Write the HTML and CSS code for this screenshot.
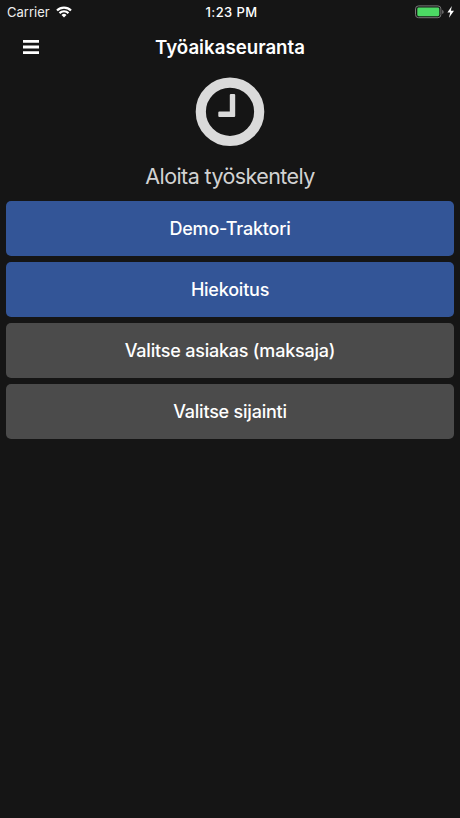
FILE: index.html
```html
<!DOCTYPE html>
<html lang="fi">

<head>
    <meta charset="UTF-8">
    <meta name="viewport" content="width=device-width, initial-scale=1.0">
    <title>Työaikaseuranta</title>
    <link rel="stylesheet" href="styles.css">
</head>

<body>
    <div class="statusbar">
        <div class="network">
            <span class="carrier">Carrier</span>
            <svg class="wifi" width="16" height="12" viewBox="0 0 16 12">
                <path d="M1 4.5a9.9 9.9 0 0 1 14 0" />
                <path d="M3.5 7.1a6.4 6.4 0 0 1 9 0" />
                <path class="dot" d="M8 11.6L5.5 9.1a3.5 3.5 0 0 1 5 0z" />
            </svg>
        </div>
        <span class="time">1:23 PM</span>
        <div class="power">
            <svg width="40" height="14" viewBox="0 0 40 14">
                <rect class="battery" x=".5" y=".9" width="25.4" height="11.8" rx="3" />
                <rect class="level" x="2.3" y="2.6" width="22" height="8.6" rx="1.4" />
                <path class="cap" d="M27.2 4.7c2 .8 2 3.6 0 4.4z" />
                <path class="bolt" d="M36.8 .9L32.4 7.6h2.8l-1.2 5.2 5-7h-3.1z" />
            </svg>
        </div>
    </div>

    <header>
        <button class="menu" aria-label="Menu">
            <svg width="16" height="15" viewBox="0 0 16 15">
                <path d="M0 1.4h16M0 7h16M0 12.6h16" />
            </svg>
        </button>
        <h1>Työaikaseuranta</h1>
    </header>

    <main>
        <svg class="clock" width="70" height="70" viewBox="0 0 70 70">
            <circle cx="35" cy="34.8" r="29.2" />
            <path d="M35.9 17h3.2q1.1 0 1.1 1.1v20.8q0 1.1-1.1 1.1H24.4q-1.1 0-1.1-1.1v-3.4q0-1.1 1.1-1.1h10.4V18.1q0-1.1 1.1-1.1z" />
        </svg>
        <h2>Aloita työskentely</h2>
        <div class="buttons">
            <button class="selected">Demo-Traktori</button>
            <button class="selected">Hiekoitus</button>
            <button>Valitse asiakas (maksaja)</button>
            <button>Valitse sijainti</button>
        </div>
    </main>
</body>

</html>
```

FILE: styles.css
```css
* {
    padding: 0;
    margin: 0;
    box-sizing: border-box;
}

body {
    min-height: 818px;
    background-color: #151515;
    color: #fff;
    font-family: Inter, "Liberation Sans", sans-serif;
}

svg {
    display: block;
}

button {
    border: none;
    color: #fff;
    font-family: inherit;
}

.statusbar {
    display: grid;
    grid-template-columns: 1fr auto 1fr;
    align-items: center;
    height: 24px;
    padding: 0 5px 0 7px;
    font-size: 13px;
}

.network {
    display: flex;
    align-items: center;
    gap: 6px;
}

.carrier {
    color: #eee;
}

.wifi path {
    fill: none;
    stroke: #fff;
    stroke-width: 2.2;
}

.wifi .dot {
    fill: #fff;
    stroke: none;
}

.time {
    padding-left: 1px;
    font-weight: 500;
    letter-spacing: 0.4px;
}

.power {
    justify-self: end;
}

.battery {
    fill: none;
    stroke: #777;
}

.level {
    fill: #4cd964;
}

.cap {
    fill: #777;
}

.bolt {
    fill: #fff;
}

header {
    display: grid;
    grid-template-columns: 54px 1fr 54px;
    align-items: center;
    height: 46px;
}

.menu {
    padding-left: 23px;
    background: none;
}

.menu path {
    stroke: #fff;
    stroke-width: 2.8;
}

h1 {
    font-size: 18.7px;
    font-weight: 600;
    text-align: center;
}

main {
    padding: 7px 6px 0;
}

.clock {
    margin: 0 auto;
}

.clock circle {
    fill: none;
    stroke: #dadada;
    stroke-width: 10.2;
}

.clock path {
    fill: #dadada;
}

h2 {
    height: 53.5px;
    padding-top: 15px;
    color: #d2d2d2;
    font-size: 21.5px;
    font-weight: 400;
    letter-spacing: -0.6px;
    line-height: 28px;
    text-align: center;
}

.buttons {
    display: flex;
    flex-direction: column;
    gap: 5.5px;
}

.buttons button {
    height: 55.6px;
    border-radius: 5px;
    background-color: #4b4b4b;
    font-size: 18px;
    font-weight: 500;
    letter-spacing: -0.22px;
}

.buttons .selected {
    background-color: #335597;
}
```
